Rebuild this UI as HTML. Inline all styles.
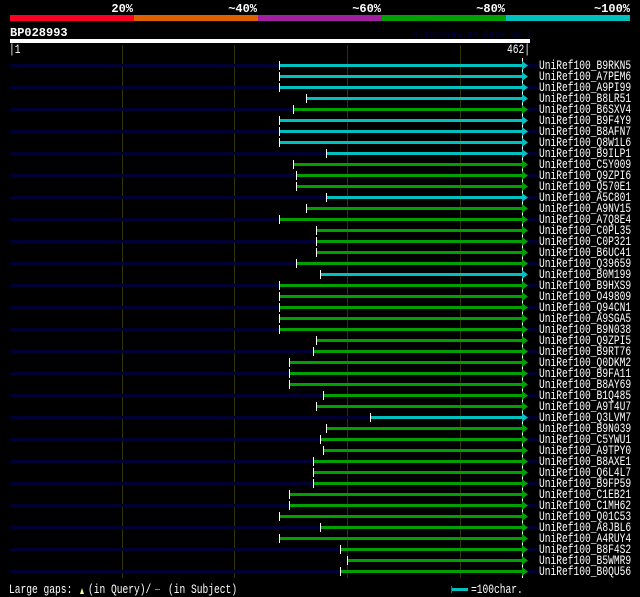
<!DOCTYPE html>
<html><head><meta charset="utf-8"><style>
html,body{margin:0;padding:0;background:#000;width:640px;height:597px;overflow:hidden}
svg{display:block}
text{font-family:"Liberation Mono",monospace;fill:#fff}
.l{font-size:9.6px;transform-box:fill-box;transform-origin:0 100%;transform:scaleY(1.3)}
.n{fill:#000033}
.c{fill:#00c0c0}
.g{fill:#00a000}
.t{fill:#fff}
</style></head><body>
<svg width="640" height="597" xmlns="http://www.w3.org/2000/svg">
<text x="133" y="12" font-size="12" font-weight="bold" text-anchor="end">20%</text>
<text x="257" y="12" font-size="12" font-weight="bold" text-anchor="end">~40%</text>
<text x="381" y="12" font-size="12" font-weight="bold" text-anchor="end">~60%</text>
<text x="505" y="12" font-size="12" font-weight="bold" text-anchor="end">~80%</text>
<text x="630" y="12" font-size="12" font-weight="bold" text-anchor="end">~100%</text>
<rect x="10" y="15" width="124" height="6" fill="#ff0022"/>
<rect x="134" y="15" width="124" height="6" fill="#e06000"/>
<rect x="258" y="15" width="124" height="6" fill="#a020a0"/>
<rect x="382" y="15" width="124" height="6" fill="#00a000"/>
<rect x="506" y="15" width="124" height="6" fill="#00c0c0"/>
<text x="10" y="36" font-size="12" font-weight="bold">BP028993</text>
<text x="413" y="37" font-size="9" style="fill:#000040">AlignView.pm Beta v1.7</text>
<rect x="10" y="39" width="520" height="4" fill="#fff"/>
<text x="9" y="54" class="l">|1</text>
<text x="507" y="54" class="l">462|</text>
<g fill="#333300">
<rect x="122" y="45" width="1" height="533"/><rect x="234" y="45" width="1" height="533"/><rect x="347" y="45" width="1" height="533"/><rect x="460" y="45" width="1" height="533"/>
</g>
<rect x="522" y="58" width="1" height="520" fill="#fff"/>
<defs>
<g id="nv"><rect x="10" y="-1" width="527" height="3" class="n"/></g>
</defs>
<g id="rows">
<g transform="translate(0,65)"><use href="#nv"/><rect x="279" y="-1" width="243" height="3" class="c"/><rect x="279" y="-4" width="1" height="9" class="t"/><path d="M522,-4L528,0.5L522,5Z" class="c"/><text x="539" y="5" class="l">UniRef100_B9RKN5</text></g>
<g transform="translate(0,76)"><rect x="279" y="-1" width="243" height="3" class="c"/><rect x="279" y="-4" width="1" height="9" class="t"/><path d="M522,-4L528,0.5L522,5Z" class="c"/><text x="539" y="5" class="l">UniRef100_A7PEM6</text></g>
<g transform="translate(0,87)"><use href="#nv"/><rect x="279" y="-1" width="243" height="3" class="c"/><rect x="279" y="-4" width="1" height="9" class="t"/><path d="M522,-4L528,0.5L522,5Z" class="c"/><text x="539" y="5" class="l">UniRef100_A9PI99</text></g>
<g transform="translate(0,98)"><rect x="306" y="-1" width="216" height="3" class="c"/><rect x="306" y="-4" width="1" height="9" class="t"/><path d="M522,-4L528,0.5L522,5Z" class="c"/><text x="539" y="5" class="l">UniRef100_B8LR51</text></g>
<g transform="translate(0,109)"><use href="#nv"/><rect x="293" y="-1" width="229" height="3" class="g"/><rect x="293" y="-4" width="1" height="9" class="t"/><path d="M522,-4L528,0.5L522,5Z" class="g"/><text x="539" y="5" class="l">UniRef100_B6SXV4</text></g>
<g transform="translate(0,120)"><rect x="279" y="-1" width="243" height="3" class="c"/><rect x="279" y="-4" width="1" height="9" class="t"/><path d="M522,-4L528,0.5L522,5Z" class="c"/><text x="539" y="5" class="l">UniRef100_B9F4Y9</text></g>
<g transform="translate(0,131)"><use href="#nv"/><rect x="279" y="-1" width="243" height="3" class="c"/><rect x="279" y="-4" width="1" height="9" class="t"/><path d="M522,-4L528,0.5L522,5Z" class="c"/><text x="539" y="5" class="l">UniRef100_B8AFN7</text></g>
<g transform="translate(0,142)"><rect x="279" y="-1" width="243" height="3" class="c"/><rect x="279" y="-4" width="1" height="9" class="t"/><path d="M522,-4L528,0.5L522,5Z" class="c"/><text x="539" y="5" class="l">UniRef100_Q8W1L6</text></g>
<g transform="translate(0,153)"><use href="#nv"/><rect x="326" y="-1" width="196" height="3" class="c"/><rect x="326" y="-4" width="1" height="9" class="t"/><path d="M522,-4L528,0.5L522,5Z" class="c"/><text x="539" y="5" class="l">UniRef100_B9ILP1</text></g>
<g transform="translate(0,164)"><rect x="293" y="-1" width="229" height="3" class="g"/><rect x="293" y="-4" width="1" height="9" class="t"/><path d="M522,-4L528,0.5L522,5Z" class="g"/><text x="539" y="5" class="l">UniRef100_C5Y009</text></g>
<g transform="translate(0,175)"><use href="#nv"/><rect x="296" y="-1" width="226" height="3" class="g"/><rect x="296" y="-4" width="1" height="9" class="t"/><path d="M522,-4L528,0.5L522,5Z" class="g"/><text x="539" y="5" class="l">UniRef100_Q9ZPI6</text></g>
<g transform="translate(0,186)"><rect x="296" y="-1" width="226" height="3" class="g"/><rect x="296" y="-4" width="1" height="9" class="t"/><path d="M522,-4L528,0.5L522,5Z" class="g"/><text x="539" y="5" class="l">UniRef100_Q570E1</text></g>
<g transform="translate(0,197)"><use href="#nv"/><rect x="326" y="-1" width="196" height="3" class="c"/><rect x="326" y="-4" width="1" height="9" class="t"/><path d="M522,-4L528,0.5L522,5Z" class="c"/><text x="539" y="5" class="l">UniRef100_A5C801</text></g>
<g transform="translate(0,208)"><rect x="306" y="-1" width="216" height="3" class="g"/><rect x="306" y="-4" width="1" height="9" class="t"/><path d="M522,-4L528,0.5L522,5Z" class="g"/><text x="539" y="5" class="l">UniRef100_A9NV15</text></g>
<g transform="translate(0,219)"><use href="#nv"/><rect x="279" y="-1" width="243" height="3" class="g"/><rect x="279" y="-4" width="1" height="9" class="t"/><path d="M522,-4L528,0.5L522,5Z" class="g"/><text x="539" y="5" class="l">UniRef100_A7Q8E4</text></g>
<g transform="translate(0,230)"><rect x="316" y="-1" width="206" height="3" class="g"/><rect x="316" y="-4" width="1" height="9" class="t"/><path d="M522,-4L528,0.5L522,5Z" class="g"/><text x="539" y="5" class="l">UniRef100_C0PL35</text></g>
<g transform="translate(0,241)"><use href="#nv"/><rect x="316" y="-1" width="206" height="3" class="g"/><rect x="316" y="-4" width="1" height="9" class="t"/><path d="M522,-4L528,0.5L522,5Z" class="g"/><text x="539" y="5" class="l">UniRef100_C0P321</text></g>
<g transform="translate(0,252)"><rect x="316" y="-1" width="206" height="3" class="g"/><rect x="316" y="-4" width="1" height="9" class="t"/><path d="M522,-4L528,0.5L522,5Z" class="g"/><text x="539" y="5" class="l">UniRef100_B6UC41</text></g>
<g transform="translate(0,263)"><use href="#nv"/><rect x="296" y="-1" width="226" height="3" class="g"/><rect x="296" y="-4" width="1" height="9" class="t"/><path d="M522,-4L528,0.5L522,5Z" class="g"/><text x="539" y="5" class="l">UniRef100_Q39659</text></g>
<g transform="translate(0,274)"><rect x="320" y="-1" width="202" height="3" class="c"/><rect x="320" y="-4" width="1" height="9" class="t"/><path d="M522,-4L528,0.5L522,5Z" class="c"/><text x="539" y="5" class="l">UniRef100_B0M199</text></g>
<g transform="translate(0,285)"><use href="#nv"/><rect x="279" y="-1" width="243" height="3" class="g"/><rect x="279" y="-4" width="1" height="9" class="t"/><path d="M522,-4L528,0.5L522,5Z" class="g"/><text x="539" y="5" class="l">UniRef100_B9HXS9</text></g>
<g transform="translate(0,296)"><rect x="279" y="-1" width="243" height="3" class="g"/><rect x="279" y="-4" width="1" height="9" class="t"/><path d="M522,-4L528,0.5L522,5Z" class="g"/><text x="539" y="5" class="l">UniRef100_O49809</text></g>
<g transform="translate(0,307)"><use href="#nv"/><rect x="279" y="-1" width="243" height="3" class="g"/><rect x="279" y="-4" width="1" height="9" class="t"/><path d="M522,-4L528,0.5L522,5Z" class="g"/><text x="539" y="5" class="l">UniRef100_Q94CN1</text></g>
<g transform="translate(0,318)"><rect x="279" y="-1" width="243" height="3" class="g"/><rect x="279" y="-4" width="1" height="9" class="t"/><path d="M522,-4L528,0.5L522,5Z" class="g"/><text x="539" y="5" class="l">UniRef100_A9SGA5</text></g>
<g transform="translate(0,329)"><use href="#nv"/><rect x="279" y="-1" width="243" height="3" class="g"/><rect x="279" y="-4" width="1" height="9" class="t"/><path d="M522,-4L528,0.5L522,5Z" class="g"/><text x="539" y="5" class="l">UniRef100_B9N038</text></g>
<g transform="translate(0,340)"><rect x="316" y="-1" width="206" height="3" class="g"/><rect x="316" y="-4" width="1" height="9" class="t"/><path d="M522,-4L528,0.5L522,5Z" class="g"/><text x="539" y="5" class="l">UniRef100_Q9ZPI5</text></g>
<g transform="translate(0,351)"><use href="#nv"/><rect x="313" y="-1" width="209" height="3" class="g"/><rect x="313" y="-4" width="1" height="9" class="t"/><path d="M522,-4L528,0.5L522,5Z" class="g"/><text x="539" y="5" class="l">UniRef100_B9RT76</text></g>
<g transform="translate(0,362)"><rect x="289" y="-1" width="233" height="3" class="g"/><rect x="289" y="-4" width="1" height="9" class="t"/><path d="M522,-4L528,0.5L522,5Z" class="g"/><text x="539" y="5" class="l">UniRef100_Q0DKM2</text></g>
<g transform="translate(0,373)"><use href="#nv"/><rect x="289" y="-1" width="233" height="3" class="g"/><rect x="289" y="-4" width="1" height="9" class="t"/><path d="M522,-4L528,0.5L522,5Z" class="g"/><text x="539" y="5" class="l">UniRef100_B9FA11</text></g>
<g transform="translate(0,384)"><rect x="289" y="-1" width="233" height="3" class="g"/><rect x="289" y="-4" width="1" height="9" class="t"/><path d="M522,-4L528,0.5L522,5Z" class="g"/><text x="539" y="5" class="l">UniRef100_B8AY69</text></g>
<g transform="translate(0,395)"><use href="#nv"/><rect x="323" y="-1" width="199" height="3" class="g"/><rect x="323" y="-4" width="1" height="9" class="t"/><path d="M522,-4L528,0.5L522,5Z" class="g"/><text x="539" y="5" class="l">UniRef100_B1Q485</text></g>
<g transform="translate(0,406)"><rect x="316" y="-1" width="206" height="3" class="g"/><rect x="316" y="-4" width="1" height="9" class="t"/><path d="M522,-4L528,0.5L522,5Z" class="g"/><text x="539" y="5" class="l">UniRef100_A9T4U7</text></g>
<g transform="translate(0,417)"><use href="#nv"/><rect x="370" y="-1" width="152" height="3" class="c"/><rect x="370" y="-4" width="1" height="9" class="t"/><path d="M522,-4L528,0.5L522,5Z" class="c"/><text x="539" y="5" class="l">UniRef100_Q3LVM7</text></g>
<g transform="translate(0,428)"><rect x="326" y="-1" width="196" height="3" class="g"/><rect x="326" y="-4" width="1" height="9" class="t"/><path d="M522,-4L528,0.5L522,5Z" class="g"/><text x="539" y="5" class="l">UniRef100_B9N039</text></g>
<g transform="translate(0,439)"><use href="#nv"/><rect x="320" y="-1" width="202" height="3" class="g"/><rect x="320" y="-4" width="1" height="9" class="t"/><path d="M522,-4L528,0.5L522,5Z" class="g"/><text x="539" y="5" class="l">UniRef100_C5YWU1</text></g>
<g transform="translate(0,450)"><rect x="323" y="-1" width="199" height="3" class="g"/><rect x="323" y="-4" width="1" height="9" class="t"/><path d="M522,-4L528,0.5L522,5Z" class="g"/><text x="539" y="5" class="l">UniRef100_A9TPY0</text></g>
<g transform="translate(0,461)"><use href="#nv"/><rect x="313" y="-1" width="209" height="3" class="g"/><rect x="313" y="-4" width="1" height="9" class="t"/><path d="M522,-4L528,0.5L522,5Z" class="g"/><text x="539" y="5" class="l">UniRef100_B8AXE1</text></g>
<g transform="translate(0,472)"><rect x="313" y="-1" width="209" height="3" class="g"/><rect x="313" y="-4" width="1" height="9" class="t"/><path d="M522,-4L528,0.5L522,5Z" class="g"/><text x="539" y="5" class="l">UniRef100_Q6L4L7</text></g>
<g transform="translate(0,483)"><use href="#nv"/><rect x="313" y="-1" width="209" height="3" class="g"/><rect x="313" y="-4" width="1" height="9" class="t"/><path d="M522,-4L528,0.5L522,5Z" class="g"/><text x="539" y="5" class="l">UniRef100_B9FP59</text></g>
<g transform="translate(0,494)"><rect x="289" y="-1" width="233" height="3" class="g"/><rect x="289" y="-4" width="1" height="9" class="t"/><path d="M522,-4L528,0.5L522,5Z" class="g"/><text x="539" y="5" class="l">UniRef100_C1EB21</text></g>
<g transform="translate(0,505)"><use href="#nv"/><rect x="289" y="-1" width="233" height="3" class="g"/><rect x="289" y="-4" width="1" height="9" class="t"/><path d="M522,-4L528,0.5L522,5Z" class="g"/><text x="539" y="5" class="l">UniRef100_C1MH62</text></g>
<g transform="translate(0,516)"><rect x="279" y="-1" width="243" height="3" class="g"/><rect x="279" y="-4" width="1" height="9" class="t"/><path d="M522,-4L528,0.5L522,5Z" class="g"/><text x="539" y="5" class="l">UniRef100_Q01C53</text></g>
<g transform="translate(0,527)"><use href="#nv"/><rect x="320" y="-1" width="202" height="3" class="g"/><rect x="320" y="-4" width="1" height="9" class="t"/><path d="M522,-4L528,0.5L522,5Z" class="g"/><text x="539" y="5" class="l">UniRef100_A8JBL6</text></g>
<g transform="translate(0,538)"><rect x="279" y="-1" width="243" height="3" class="g"/><rect x="279" y="-4" width="1" height="9" class="t"/><path d="M522,-4L528,0.5L522,5Z" class="g"/><text x="539" y="5" class="l">UniRef100_A4RUY4</text></g>
<g transform="translate(0,549)"><use href="#nv"/><rect x="340" y="-1" width="182" height="3" class="g"/><rect x="340" y="-4" width="1" height="9" class="t"/><path d="M522,-4L528,0.5L522,5Z" class="g"/><text x="539" y="5" class="l">UniRef100_B8F4S2</text></g>
<g transform="translate(0,560)"><rect x="347" y="-1" width="175" height="3" class="g"/><rect x="347" y="-4" width="1" height="9" class="t"/><path d="M522,-4L528,0.5L522,5Z" class="g"/><text x="539" y="5" class="l">UniRef100_B5WMR9</text></g>
<g transform="translate(0,571)"><use href="#nv"/><rect x="340" y="-1" width="182" height="3" class="g"/><rect x="340" y="-4" width="1" height="9" class="t"/><path d="M522,-4L528,0.5L522,5Z" class="g"/><text x="539" y="5" class="l">UniRef100_B0QU56</text></g>
</g>
<text x="9" y="594" class="l">Large gaps:</text>
<path d="M80,594L82,588L84,594Z" fill="#ffff80"/>
<text x="88" y="594" class="l">(in Query)/</text>
<rect x="155" y="589" width="5" height="1" fill="#00c0c0"/>
<text x="168" y="594" class="l">(in Subject)</text>
<rect x="451" y="586" width="1" height="7" fill="#806000"/>
<rect x="452" y="588" width="16" height="3" fill="#00c0c0"/>
<text x="471" y="594" class="l">=100char.</text>
</svg>
</body></html>
